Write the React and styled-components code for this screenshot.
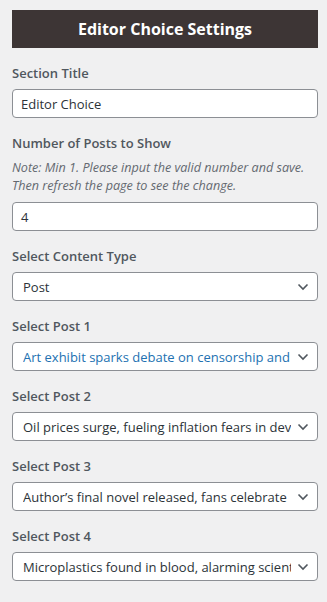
import React from "react";
import styled, { createGlobalStyle } from "styled-components";

const GlobalStyle = createGlobalStyle`
  html, body {
    margin: 0;
    padding: 0;
    background: #f0f0f1;
  }
  body {
    font-family: "Open Sans", "Noto Sans", sans-serif;
    color: #2c3338;
  }
`;

const posts = [
  { label: "Select Post 1", value: "Art exhibit sparks debate on censorship and", active: true },
  { label: "Select Post 2", value: "Oil prices surge, fueling inflation fears in developing" },
  { label: "Select Post 3", value: "Author\u2019s final novel released, fans celebrate" },
  { label: "Select Post 4", value: "Microplastics found in blood, alarming scientists" },
];

const Chevron = () => (
  <ChevronStyled width="12" height="8" viewBox="0 0 12 8">
    <path d="M1.5 1.5 L6 6 L10.5 1.5" fill="none" stroke="#50575e" strokeWidth="1.6" />
  </ChevronStyled>
);

const Select = ({ value, active }) => (
  <SelectStyled>
    <SelectText active={active}>{value}</SelectText>
    <Chevron />
  </SelectStyled>
);

const App = () => (
  <>
    <GlobalStyle />
    <PanelStyled>
      <HeaderStyled>Editor Choice Settings</HeaderStyled>

      <FieldStyled>
        <LabelStyled>Section Title</LabelStyled>
        <InputStyled>Editor Choice</InputStyled>
      </FieldStyled>

      <FieldStyled>
        <LabelStyled>Number of Posts to Show</LabelStyled>
        <NoteStyled>
          Note: Min 1. Please input the valid number and save. Then refresh the page to see the change.
        </NoteStyled>
        <InputStyled>4</InputStyled>
      </FieldStyled>

      <FieldStyled>
        <LabelStyled>Select Content Type</LabelStyled>
        <Select value="Post" />
      </FieldStyled>

      {posts.map((p) => (
        <FieldStyled key={p.label}>
          <LabelStyled>{p.label}</LabelStyled>
          <Select value={p.value} active={p.active} />
        </FieldStyled>
      ))}
    </PanelStyled>
  </>
);

export default App;

const PanelStyled = styled.div`
  box-sizing: border-box;
  width: 327px;
  padding: 10px 9px 0 12px;
  display: flex;
  flex-direction: column;
`;

const HeaderStyled = styled.div`
  height: 38px;
  background: #3d3535;
  color: #fff;
  font-weight: 700;
  font-size: 16px;
  display: flex;
  align-items: center;
  justify-content: center;
  margin-bottom: 16px;
`;

const FieldStyled = styled.div`
  display: flex;
  flex-direction: column;
  margin-bottom: 16px;
`;

const LabelStyled = styled.div`
  font-size: 13px;
  font-weight: 600;
  color: #50575e;
  line-height: 18px;
  margin-bottom: 7px;
`;

const NoteStyled = styled.div`
  font-size: 12.6px;
  font-style: italic;
  color: #646970;
  line-height: 18px;
  margin: 0 0 7px;
`;

const InputStyled = styled.div`
  box-sizing: border-box;
  height: 29px;
  border: 1px solid #8c8f94;
  border-radius: 4px;
  background: #fff;
  padding: 0 8px;
  font-size: 13px;
  display: flex;
  align-items: center;
  color: #2c3338;
`;

const SelectStyled = styled.div`
  box-sizing: border-box;
  height: 29px;
  border: 1px solid #8c8f94;
  border-radius: 4px;
  background: #fff;
  padding: 0 8px 0 10px;
  display: flex;
  align-items: center;
  gap: 6px;
`;

const SelectText = styled.span`
  flex: 1;
  min-width: 0;
  overflow: hidden;
  white-space: nowrap;
  font-size: 13px;
  color: ${(p) => (p.active ? "#2271b1" : "#2c3338")};
`;

const ChevronStyled = styled.svg`
  flex: none;
`;
